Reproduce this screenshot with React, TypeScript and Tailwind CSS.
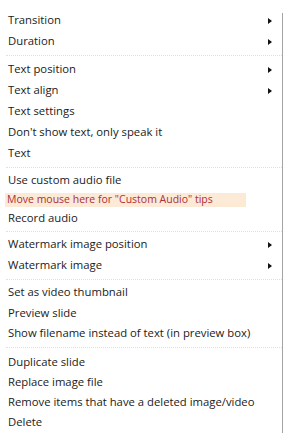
type Item =
  | { kind: 'item'; label: string; h: string; sub?: boolean }
  | { kind: 'tip'; label: string }
  | { kind: 'sep'; h: string };

const items: Item[] = [
  { kind: 'item', label: 'Transition', h: 'h-[21px]', sub: true },
  { kind: 'item', label: 'Duration', h: 'h-[21px]', sub: true },
  { kind: 'sep', h: 'h-[7px]' },
  { kind: 'item', label: 'Text position', h: 'h-[21px]', sub: true },
  { kind: 'item', label: 'Text align', h: 'h-[21px]', sub: true },
  { kind: 'item', label: 'Text settings', h: 'h-[21px]' },
  { kind: 'item', label: "Don't show text, only speak it", h: 'h-[21px]' },
  { kind: 'item', label: 'Text', h: 'h-[21px]' },
  { kind: 'sep', h: 'h-[6px]' },
  { kind: 'item', label: 'Use custom audio file', h: 'h-[20px]' },
  { kind: 'tip', label: 'Move mouse here for "Custom Audio" tips' },
  { kind: 'item', label: 'Record audio', h: 'h-[19px]' },
  { kind: 'sep', h: 'h-[6px]' },
  { kind: 'item', label: 'Watermark image position', h: 'h-[21px]', sub: true },
  { kind: 'item', label: 'Watermark image', h: 'h-[21px]', sub: true },
  { kind: 'sep', h: 'h-[6px]' },
  { kind: 'item', label: 'Set as video thumbnail', h: 'h-[21px]' },
  { kind: 'item', label: 'Preview slide', h: 'h-[20px]' },
  { kind: 'item', label: 'Show filename instead of text (in preview box)', h: 'h-[20px]' },
  { kind: 'sep', h: 'h-[9px]' },
  { kind: 'item', label: 'Duplicate slide', h: 'h-[20px]' },
  { kind: 'item', label: 'Replace image file', h: 'h-[20px]' },
  { kind: 'item', label: 'Remove items that have a deleted image/video', h: 'h-[20.5px]' },
  { kind: 'item', label: 'Delete', h: 'h-[20.5px]' },
];

export default function App() {
  return (
    <div className="w-[296px] h-[443px] bg-white overflow-hidden font-['Open_Sans',sans-serif] text-[11.3px] text-[#1a1a1a]">
      <div className="relative w-[283px] pt-[10px]">
        {/* right edge of the menu */}
        <div className="absolute right-0 top-[13px] h-[420px] w-px bg-[#a3a3a3]" />

        {items.map((it, i) => {
          if (it.kind === 'sep') {
            return (
              <div key={i} className={`${it.h} flex items-center pl-[6px] pr-px`}>
                <div className="w-full border-t border-dotted border-[#e0e0e0]" />
              </div>
            );
          }
          if (it.kind === 'tip') {
            return (
              <div key={i} className="h-[19px] flex items-center pl-[5px]">
                <div className="h-[14px] w-[241px] bg-[#fce9d6] flex items-center pl-[2px] text-[10.5px] text-[#ad2f38] whitespace-nowrap">
                  {it.label}
                </div>
              </div>
            );
          }
          return (
            <div key={i} className={`${it.h} flex items-center justify-between pl-[8px] pr-[11px] whitespace-nowrap`}>
              <span>{it.label}</span>
              {it.sub && (
                <span className="w-0 h-0 border-y-[3.5px] border-y-transparent border-l-[4px] border-l-[#111]" />
              )}
            </div>
          );
        })}
      </div>
    </div>
  );
}
